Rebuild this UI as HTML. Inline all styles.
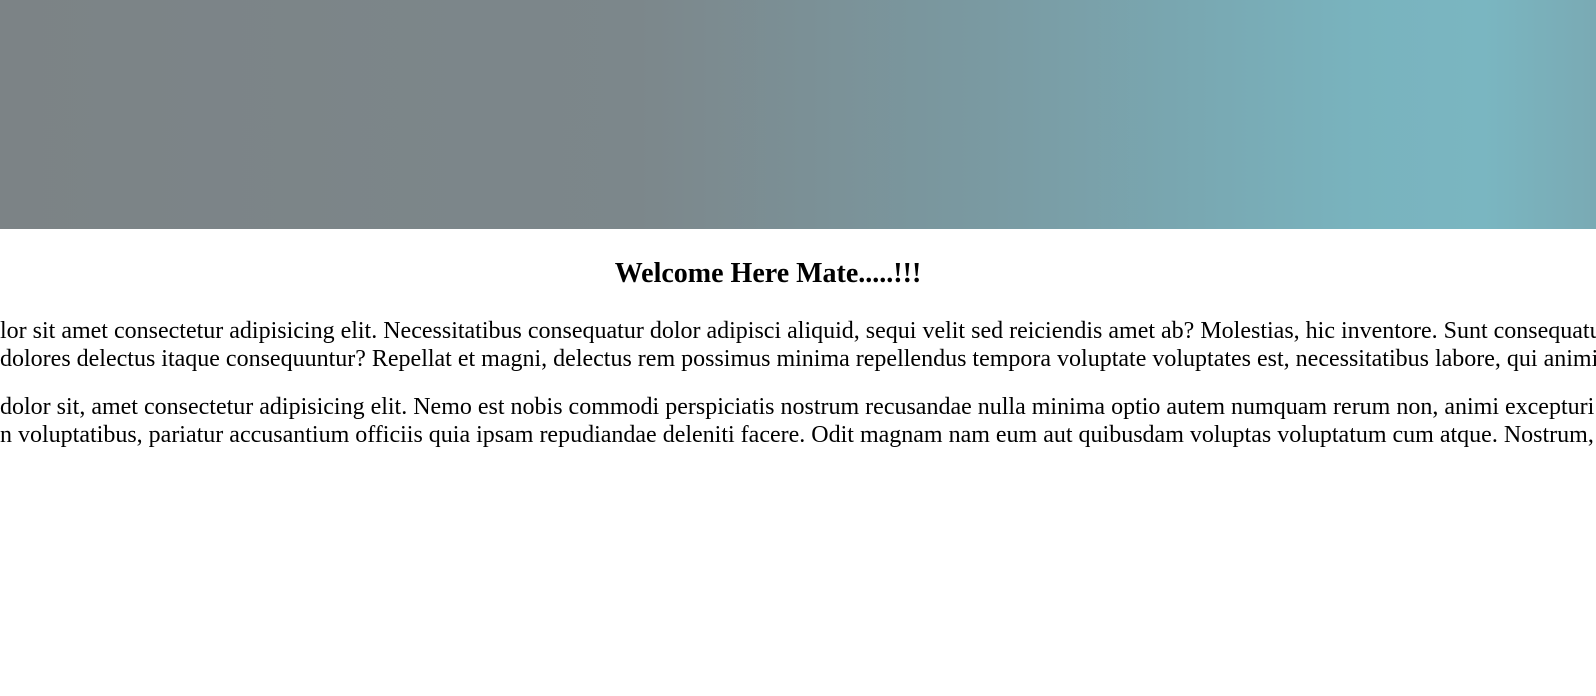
<!DOCTYPE html>
<html><head><style>
html,body{margin:0;padding:0;width:1596px;height:696px;overflow:hidden;background:#fff;font-family:"Liberation Serif",serif;color:#000}
.hdr{position:absolute;left:0;top:0;width:1596px;height:229px;background:linear-gradient(90deg,#7c8386 0%,#7c878b 40%,#7a9aa2 62%,#79a8b2 75%,#79b3be 85%,#7ab6c1 93%,#7aaab4 100%)}
h1{position:absolute;top:257px;left:568px;width:400px;margin:0;text-align:center;font-size:28px;font-weight:bold;line-height:34px;white-space:nowrap}
.l{position:absolute;left:0;white-space:nowrap;font-size:24px;line-height:28px}
</style></head><body>
<div class="hdr"></div>
<h1>Welcome Here Mate.....!!!</h1>
<div class="l" style="top:317px">lor sit amet consectetur adipisicing elit. Necessitatibus consequatur dolor adipisci aliquid, sequi velit sed reiciendis amet ab? Molestias, hic inventore. Sunt consequatur quas</div>
<div class="l" style="top:345px">dolores delectus itaque consequuntur? Repellat et magni, delectus rem possimus minima repellendus tempora voluptate voluptates est, necessitatibus labore, qui animi quo</div>
<div class="l" style="top:393px">dolor sit, amet consectetur adipisicing elit. Nemo est nobis commodi perspiciatis nostrum recusandae nulla minima optio autem numquam rerum non, animi excepturi at</div>
<div class="l" style="top:421px">n voluptatibus, pariatur accusantium officiis quia ipsam repudiandae deleniti facere. Odit magnam nam eum aut quibusdam voluptas voluptatum cum atque. Nostrum, a</div>
</body></html>
